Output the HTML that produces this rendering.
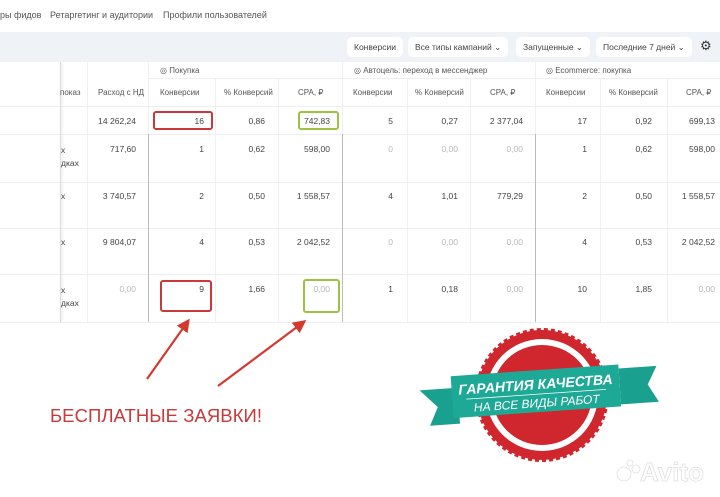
<!DOCTYPE html>
<html><head><meta charset="utf-8"><style>
*{margin:0;padding:0;box-sizing:border-box}
body{width:720px;height:497px;overflow:hidden;background:#fff;font-family:"Liberation Sans",sans-serif;position:relative;color:#444}
.a{position:absolute;white-space:nowrap}
.nav{font-size:9px;color:#555;top:10px}
.band{position:absolute;left:0;top:32px;width:720px;height:30px;background:#eff2f7}
.btn{position:absolute;top:37px;height:20px;background:#fff;border-radius:5px;font-size:8.5px;color:#444;line-height:20px;padding:0 7px}
.h{font-size:8px;color:#555}
.n{font-size:8.5px;color:#444;text-align:right}
.g{color:#b8b8b8}
.vl{position:absolute;width:1px;background:#f0f0f0}
.hl{position:absolute;height:1px;background:#eee;left:0;width:720px}
</style></head><body>
<div class="a nav" style="left:0">ры фидов</div>
<div class="a nav" style="left:50px">Ретаргетинг и аудитории</div>
<div class="a nav" style="left:163px">Профили пользователей</div>
<div class="band"></div>
<div class="btn" style="left:347px">Конверсии</div>
<div class="btn" style="left:408px">Все типы кампаний ⌄</div>
<div class="btn" style="left:516px">Запущенные ⌄</div>
<div class="btn" style="left:596px">Последние 7 дней ⌄</div>
<div class="a" style="left:700px;top:38px;font-size:13px;color:#333">⚙</div>

<div class="hl" style="top:78px;left:148px;width:572px"></div>
<div class="hl" style="top:106px"></div>
<div class="hl" style="top:134px"></div>
<div class="hl" style="top:182px"></div>
<div class="hl" style="top:228px"></div>
<div class="hl" style="top:274px"></div>
<div class="hl" style="top:322px"></div>
<div class="vl" style="left:60px;top:62px;height:260px;background:#ddd;box-shadow:1px 0 2px #ddd"></div>
<div class="vl" style="left:87px;top:62px;height:260px"></div>
<div class="vl" style="left:148px;top:62px;height:260px"></div>
<div class="vl" style="left:148px;top:134px;height:188px;background:#bbb"></div>
<div class="vl" style="left:215px;top:78px;height:244px"></div>
<div class="vl" style="left:278px;top:78px;height:244px"></div>
<div class="vl" style="left:342px;top:62px;height:260px"></div>
<div class="vl" style="left:342px;top:134px;height:188px;background:#bbb"></div>
<div class="vl" style="left:407px;top:78px;height:244px"></div>
<div class="vl" style="left:470px;top:78px;height:244px"></div>
<div class="vl" style="left:535px;top:62px;height:260px"></div>
<div class="vl" style="left:535px;top:134px;height:188px;background:#bbb"></div>
<div class="vl" style="left:600px;top:78px;height:244px"></div>
<div class="vl" style="left:667px;top:78px;height:244px"></div>

<div class="a h" style="left:160px;top:66px">◎ Покупка</div>
<div class="a h" style="left:354px;top:66px">◎ Автоцель: переход в мессенджер</div>
<div class="a h" style="left:546px;top:66px">◎ Ecommerce: покупка</div>
<div class="a h" style="left:60px;top:88px">показ</div>
<div class="a h" style="left:98px;top:88px">Расход с НД</div>
<div class="a h" style="left:160px;top:88px">Конверсии</div>
<div class="a h" style="left:224px;top:88px">% Конверсий</div>
<div class="a h" style="left:298px;top:88px">CPA, ₽</div>
<div class="a h" style="left:353px;top:88px">Конверсии</div>
<div class="a h" style="left:415px;top:88px">% Конверсий</div>
<div class="a h" style="left:490px;top:88px">CPA, ₽</div>
<div class="a h" style="left:546px;top:88px">Конверсии</div>
<div class="a h" style="left:609px;top:88px">% Конверсий</div>
<div class="a h" style="left:686px;top:88px">CPA, ₽</div>

<div class="a n" style="right:584px;top:116px">14 262,24</div>
<div class="a n" style="right:516px;top:116px">16</div>
<div class="a n" style="right:455px;top:116px">0,86</div>
<div class="a n" style="right:390px;top:116px">742,83</div>
<div class="a n" style="right:327px;top:116px">5</div>
<div class="a n" style="right:262px;top:116px">0,27</div>
<div class="a n" style="right:197px;top:116px">2 377,04</div>
<div class="a n" style="right:133px;top:116px">17</div>
<div class="a n" style="right:68px;top:116px">0,92</div>
<div class="a n" style="right:5px;top:116px">699,13</div>

<div class="a n" style="left:61px;top:144px;text-align:left;line-height:13px">х<br>дках</div>
<div class="a n" style="right:584px;top:144px">717,60</div>
<div class="a n" style="right:516px;top:144px">1</div>
<div class="a n" style="right:455px;top:144px">0,62</div>
<div class="a n" style="right:390px;top:144px">598,00</div>
<div class="a n g" style="right:327px;top:144px">0</div>
<div class="a n g" style="right:262px;top:144px">0,00</div>
<div class="a n g" style="right:197px;top:144px">0,00</div>
<div class="a n" style="right:133px;top:144px">1</div>
<div class="a n" style="right:68px;top:144px">0,62</div>
<div class="a n" style="right:5px;top:144px">598,00</div>

<div class="a n" style="left:61px;top:191px">х</div>
<div class="a n" style="right:584px;top:191px">3 740,57</div>
<div class="a n" style="right:516px;top:191px">2</div>
<div class="a n" style="right:455px;top:191px">0,50</div>
<div class="a n" style="right:390px;top:191px">1 558,57</div>
<div class="a n" style="right:327px;top:191px">4</div>
<div class="a n" style="right:262px;top:191px">1,01</div>
<div class="a n" style="right:197px;top:191px">779,29</div>
<div class="a n" style="right:133px;top:191px">2</div>
<div class="a n" style="right:68px;top:191px">0,50</div>
<div class="a n" style="right:5px;top:191px">1 558,57</div>

<div class="a n" style="left:61px;top:237px">х</div>
<div class="a n" style="right:584px;top:237px">9 804,07</div>
<div class="a n" style="right:516px;top:237px">4</div>
<div class="a n" style="right:455px;top:237px">0,53</div>
<div class="a n" style="right:390px;top:237px">2 042,52</div>
<div class="a n g" style="right:327px;top:237px">0</div>
<div class="a n g" style="right:262px;top:237px">0,00</div>
<div class="a n g" style="right:197px;top:237px">0,00</div>
<div class="a n" style="right:133px;top:237px">4</div>
<div class="a n" style="right:68px;top:237px">0,53</div>
<div class="a n" style="right:5px;top:237px">2 042,52</div>

<div class="a n" style="left:61px;top:284px;text-align:left;line-height:13px">х<br>дках</div>
<div class="a n g" style="right:584px;top:284px">0,00</div>
<div class="a n" style="right:516px;top:284px">9</div>
<div class="a n" style="right:455px;top:284px">1,66</div>
<div class="a n g" style="right:390px;top:284px">0,00</div>
<div class="a n" style="right:327px;top:284px">1</div>
<div class="a n" style="right:262px;top:284px">0,18</div>
<div class="a n g" style="right:197px;top:284px">0,00</div>
<div class="a n" style="right:133px;top:284px">10</div>
<div class="a n" style="right:68px;top:284px">1,85</div>
<div class="a n g" style="right:5px;top:284px">0,00</div>

<div class="a" style="left:153px;top:111px;width:60px;height:19px;border:2.5px solid #c8393a;border-radius:3px"></div>
<div class="a" style="left:298px;top:111px;width:41px;height:19px;border:2.5px solid #9cc23f;border-radius:3px"></div>
<div class="a" style="left:160px;top:280px;width:52px;height:32px;border:2.5px solid #c8393a;border-radius:3px"></div>
<div class="a" style="left:303px;top:279px;width:37px;height:34px;border:2.5px solid #9cc23f;border-radius:3px"></div>

<svg class="a" style="left:0;top:0" width="720" height="497">
<defs><marker id="m" markerWidth="6" markerHeight="6" refX="3" refY="3" orient="auto"><path d="M0,0L6,3L0,6z" fill="#d23a30"/></marker></defs>
<line x1="147" y1="379" x2="186" y2="324" stroke="#d23a30" stroke-width="2.2" marker-end="url(#m)"/>
<line x1="218" y1="386" x2="301" y2="324" stroke="#d23a30" stroke-width="2.2" marker-end="url(#m)"/>
<text x="50" y="422" font-family="Liberation Sans" font-size="18.5" fill="#c8393a" textLength="212">БЕСПЛАТНЫЕ ЗАЯВКИ!</text>
<g transform="translate(542,395)">
<circle r="65" fill="#d0262e" stroke="#d0262e" stroke-width="4" stroke-dasharray="4 3"/>
<circle r="56" fill="#fff"/>
<circle r="50" fill="#d0262e"/>
</g>
<g transform="rotate(-4 540 392)">
<path d="M420,382L458,382L458,418L428,418L437,400Z" fill="#19a08f"/>
<path d="M620,374L658,374L648,392L658,410L620,410Z" fill="#19a08f"/>
<rect x="452" y="370" width="168" height="42" fill="#1ea896"/>
<text x="536" y="389" font-family="Liberation Sans" font-weight="bold" font-style="italic" font-size="14" fill="#fff" text-anchor="middle">ГАРАНТИЯ КАЧЕСТВА</text>
<line x1="466" y1="394" x2="606" y2="394" stroke="#fff" stroke-width="0.8"/>
<text x="536" y="407" font-family="Liberation Sans" font-style="italic" font-size="12" fill="#fff" text-anchor="middle">НА ВСЕ ВИДЫ РАБОТ</text>
</g>
<g opacity="0.9" fill="#fff" stroke="#ddd" stroke-width="0.8">
<circle cx="624" cy="474" r="7"/><circle cx="636" cy="469" r="4"/><circle cx="630" cy="463" r="3"/>
<text x="640" y="481" font-family="Liberation Sans" font-size="26" font-weight="bold">Avito</text>
</g>
</svg>
</body></html>
